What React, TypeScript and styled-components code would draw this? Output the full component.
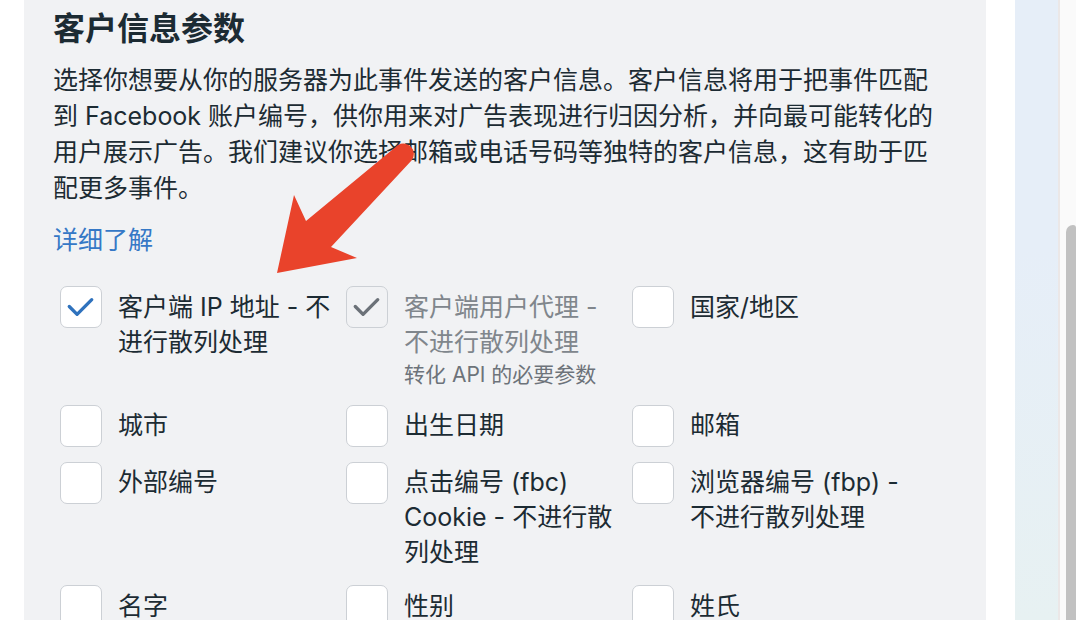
import React from "react";
import styled, { createGlobalStyle } from "styled-components";

const GlobalStyle = createGlobalStyle`
  html, body {
    margin: 0;
    padding: 0;
    background: #ffffff;
    overflow: hidden;
  }
  body {
    font-family: "Inter", "Noto Sans CJK SC", sans-serif;
  }
`;

interface Field {
  lines: string[];
  checked?: boolean;
  disabled?: boolean;
  hint?: string;
}

const fields: Field[] = [
  { lines: ["客户端 IP 地址 - 不", "进行散列处理"], checked: true },
  {
    lines: ["客户端用户代理 -", "不进行散列处理"],
    checked: true,
    disabled: true,
    hint: "转化 API 的必要参数",
  },
  { lines: ["国家/地区"] },
  { lines: ["城市"] },
  { lines: ["出生日期"] },
  { lines: ["邮箱"] },
  { lines: ["外部编号"] },
  { lines: ["点击编号 (fbc)", "Cookie - 不进行散", "列处理"] },
  { lines: ["浏览器编号 (fbp) -", "不进行散列处理"] },
  { lines: ["名字"] },
  { lines: ["性别"] },
  { lines: ["姓氏"] },
];

const descriptionLines = [
  "选择你想要从你的服务器为此事件发送的客户信息。客户信息将用于把事件匹配",
  "到 Facebook 账户编号，供你用来对广告表现进行归因分析，并向最可能转化的",
  "用户展示广告。我们建议你选择邮箱或电话号码等独特的客户信息，这有助于匹",
  "配更多事件。",
];

const Page = styled.div`
  position: relative;
  display: flex;
  width: 1076px;
  height: 620px;
  overflow: hidden;
`;

const Gutter = styled.div`
  width: 24px;
  flex-shrink: 0;
  background: #ffffff;
`;

const Panel = styled.section`
  width: 962px;
  flex-shrink: 0;
  box-sizing: border-box;
  padding: 9px 29px 0;
  background: #f1f2f4;
  color: #1c2b33;
`;

const Spacer = styled.div`
  width: 29px;
  flex-shrink: 0;
  background: #ffffff;
`;

const SideStrip = styled.div`
  width: 43px;
  flex-shrink: 0;
  background: linear-gradient(180deg, #e6eef8 0%, #e6eef8 40%, #e7f1f2 100%);
`;

const ScrollTrack = styled.div`
  flex: 1;
  display: flex;
  box-sizing: border-box;
  padding: 225px 0 0 6px;
  border-left: 2px solid #ebe7e7;
  background: #fafafa;
`;

const ScrollThumb = styled.div`
  flex: 1;
  background: #c1c1c1;
  border-radius: 7px 3px 0 0;
`;

const Title = styled.h2`
  margin: 0;
  font-size: 32px;
  line-height: 40px;
  font-weight: 600;
`;

const Description = styled.p`
  margin: 13px 0 0;
  font-size: 25px;
  line-height: 36px;
`;

const Line = styled.span`
  display: block;
  white-space: nowrap;
`;

const LearnMore = styled.a`
  display: block;
  margin-top: 16px;
  font-size: 25px;
  line-height: 36px;
  color: #3578c6;
  text-decoration: none;
`;

const FieldGrid = styled.div`
  display: grid;
  grid-template-columns: repeat(3, 286px);
  row-gap: 15px;
  margin-top: 28px;
  padding-left: 7px;
`;

const Option = styled.label`
  display: flex;
  align-items: flex-start;
  gap: 16px;
`;

const Box = styled.span<{ $disabled?: boolean }>`
  display: flex;
  align-items: center;
  justify-content: center;
  width: 42px;
  height: 42px;
  flex-shrink: 0;
  box-sizing: border-box;
  border: 1px solid #ccd0d5;
  border-radius: 7px;
  background: ${(p) => (p.$disabled ? "#f1f2f4" : "#ffffff")};
`;

const Label = styled.span<{ $disabled?: boolean }>`
  display: block;
  padding-top: 3.5px;
  font-size: 25px;
  line-height: 35px;
  color: ${(p) => (p.$disabled ? "#80868c" : "#1c2b33")};
`;

const Hint = styled.span`
  display: block;
  font-size: 21px;
  line-height: 30px;
  color: #6d737a;
`;

const Overlay = styled.svg`
  position: absolute;
  left: 0;
  top: 0;
  pointer-events: none;
`;

const Check: React.FC<{ color: string }> = ({ color }) => (
  <svg width="42" height="42" viewBox="0 0 42 42" style={{ marginLeft: -1, marginTop: -1 }}>
    <polyline
      points="9.5,20.5 17.5,28.5 32.5,13.5"
      fill="none"
      stroke={color}
      strokeWidth="3.4"
      strokeLinecap="round"
      strokeLinejoin="round"
    />
  </svg>
);

const FieldOption: React.FC<{ field: Field }> = ({ field }) => (
  <Option>
    <Box $disabled={field.disabled}>
      {field.checked && <Check color={field.disabled ? "#6b7178" : "#2f72bd"} />}
    </Box>
    <Label $disabled={field.disabled}>
      {field.lines.map((l) => (
        <Line key={l}>{l}</Line>
      ))}
      {field.hint && <Hint>{field.hint}</Hint>}
    </Label>
  </Option>
);

const App: React.FC = () => {
  return (
    <>
      <GlobalStyle />
      <Page>
        <Gutter />
        <Panel>
          <Title>客户信息参数</Title>
          <Description>
            {descriptionLines.map((l) => (
              <Line key={l}>{l}</Line>
            ))}
          </Description>
          <LearnMore href="#">详细了解</LearnMore>
          <FieldGrid>
            {fields.map((f) => (
              <FieldOption key={f.lines.join("")} field={f} />
            ))}
          </FieldGrid>
        </Panel>
        <Spacer />
        <SideStrip />
        <ScrollTrack>
          <ScrollThumb />
        </ScrollTrack>
        <Overlay width="1076" height="620" viewBox="0 0 1076 620">
          <path
            d="M 398 145 L 306 221 L 294 195 L 277 273 L 357 258 L 331 247 L 412 160 A 10.5 10.5 0 0 0 398 145 Z"
            fill="#e9432b"
          />
        </Overlay>
      </Page>
    </>
  );
};

export default App;
